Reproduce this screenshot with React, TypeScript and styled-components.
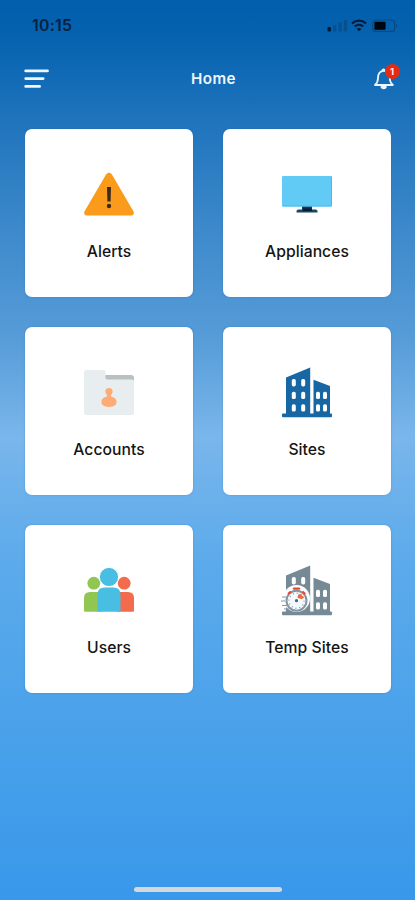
import React from 'react';
import styled, { createGlobalStyle } from 'styled-components';

const GlobalStyle = createGlobalStyle`
  * { box-sizing: border-box; }
  body { margin: 0; font-family: Inter, 'Liberation Sans', sans-serif; }
  svg { display: block; flex: none; }
`;

const Screen = styled.div`
  width: 415px;
  height: 900px;
  display: flex;
  flex-direction: column;
  overflow: hidden;
  background: linear-gradient(180deg, #005eac 0%, #0562af 4%, #2175bd 14%, #458fcf 29%, #559bd7 37%, #79b6eb 48.5%, #5baaeb 63%, #3898ea 100%);
`;

const StatusBar = styled.header`
  height: 50px;
  padding: 0 17px 0 32px;
  display: flex;
  align-items: center;
  justify-content: space-between;
`;

const Clock = styled.time`
  font-size: 15.8px;
  font-weight: 600;
  letter-spacing: 0.3px;
  color: #06213f;
`;

const NavBar = styled.nav`
  height: 58px;
  padding: 0 14px 0 24px;
  display: grid;
  grid-template-columns: 28px 1fr 28px;
  align-items: center;
`;

const IconButton = styled.button`
  padding: 0;
  border: 0;
  background: none;
  height: 30px;
  display: flex;
  align-items: center;
`;

const BellButton = styled(IconButton)`
  position: relative;
`;

const Badge = styled.span`
  position: absolute;
  top: 0;
  right: 1.5px;
  width: 15px;
  height: 15px;
  border-radius: 50%;
  background: #e62b12;
  color: #ffe9e4;
  font: 700 9.5px/15px Inter, sans-serif;
  text-align: center;
`;

const Title = styled.h1`
  margin: 0;
  padding-left: 2px;
  font-size: 15.2px;
  line-height: 20px;
  font-weight: 600;
  letter-spacing: 0.4px;
  text-align: center;
  color: #eef6ff;
`;

const Grid = styled.main`
  flex: 1;
  padding: 21px 25px 0;
  display: grid;
  grid-template-columns: repeat(2, 168px);
  grid-auto-rows: 168px;
  gap: 30px;
  align-content: start;
`;

const Card = styled.a`
  padding-top: 39px;
  display: flex;
  flex-direction: column;
  align-items: center;
  gap: 22px;
  background: #fff;
  border-radius: 7px;
  box-shadow: 0 0 2px rgba(20, 90, 160, 0.35);
`;

const Label = styled.span`
  font-size: 15.7px;
  line-height: 20px;
  font-weight: 500;
  letter-spacing: 0.05px;
  color: #151515;
`;

const HomeArea = styled.footer`
  height: 16px;
  padding-top: 3px;
  display: flex;
  justify-content: center;
`;

const HomeIndicator = styled.div`
  width: 148px;
  height: 5px;
  border-radius: 3px;
  background: #d5d7dc;
`;

const StatusIcons = () => (
  <svg width="74" height="16" viewBox="0 0 74 16">
    <rect x="3.5" y="10" width="3.5" height="4.5" rx="1" fill="#031a33" />
    <g fill="#07508f">
      <rect x="9" y="8" width="3.3" height="6.5" rx="1" />
      <rect x="14.5" y="5.5" width="3.3" height="9" rx="1" />
      <rect x="19.8" y="3" width="3.3" height="11.5" rx="1" />
    </g>
    <g fill="none" stroke="#021c38" strokeWidth="2.2">
      <path d="M28 6.4c4-3.7 10-3.7 14 0" />
      <path d="M30.8 9.5c2.4-2.2 6-2.2 8.4 0" />
    </g>
    <path d="M35 14.3l-2.4-2.4c1.4-1.2 3.4-1.2 4.8 0z" fill="#021c38" />
    <rect x="48.7" y="3" width="22" height="11.4" rx="3" fill="none" stroke="#084a83" strokeWidth="1.2" />
    <rect x="50.4" y="4.7" width="11.2" height="8" rx="1" fill="#01060e" />
    <path d="M72 6.8c1.6.8 1.6 3 0 3.8z" fill="#084a83" />
  </svg>
);

const MenuIcon = () => (
  <svg width="26" height="22" viewBox="0 0 26 22" stroke="#eef6ff" strokeWidth="2.8" strokeLinecap="round">
    <path d="M1.7 2.9h21.8M1.7 10.6h17.5M1.7 18.4h13.9" />
  </svg>
);

const BellIcon = () => (
  <svg width="24" height="26" viewBox="0 0 24 26" fill="none" stroke="#edf6ff" strokeWidth="1.8" strokeLinejoin="round" strokeLinecap="round">
    <path d="M2 19c2.2-1.8 3-4 3-7 0-4.4 1.9-7.2 5.9-7.2s5.9 2.8 5.9 7.2c0 3 .8 5.2 3.1 7z" />
    <path d="M9.4 4.2c.4-1.2 2-1.2 2.4 0M8.4 21c.8 1.8 3.8 1.8 4.6 0z" />
  </svg>
);

const Glyph = styled.svg.attrs({ width: 52, height: 52, viewBox: '0 0 52 52' })``;

const AlertIcon = () => (
  <Glyph>
    <path d="M23.2 6.2c1.2-2.1 4.4-2.1 5.6 0l21.6 37c1.2 2-.1 4.4-2.4 4.4H4c-2.3 0-3.6-2.4-2.4-4.4z" fill="#fb9b1c" />
    <path d="M24 19h4l-.4 14.5h-3.2z" fill="#3c2b18" />
    <circle cx="26" cy="38" r="2.2" fill="#3c2b18" />
  </Glyph>
);

const MonitorIcon = () => (
  <Glyph>
    <path d="M21 37h10v5H21z" fill="#143955" />
    <path d="M15.5 43.4c0-1.6 1-2 3-2h15c2 0 3 .4 3 2v1h-21z" fill="#174767" />
    <path d="M22 40.5h9v2.5h-9z" fill="#071e34" />
    <rect x="1" y="8" width="50" height="30.5" rx="1" fill="#62cbf5" />
    <path d="M1.5 38h49V8.8" fill="none" stroke="#4fb9e4" />
  </Glyph>
);

const FolderIcon = () => (
  <Glyph>
    <path d="M22 9h26c2 0 3 1 3 3v6H22z" fill="#b8c0c2" />
    <path d="M1 6.5q0-2.5 2.5-2.5h17q2 0 2 2v5.5q0 2 2 2H49q2 0 2 2V47q0 2-2 2H3q-2 0-2-2z" fill="#e8edf0" />
    <circle cx="26" cy="25.6" r="3.6" fill="#ffab76" />
    <path d="M24 28h4v2.6c3.7.6 5.6 2.8 5.6 5.5 0 3.1-3 4.9-7.6 4.9s-7.6-1.8-7.6-4.9c0-2.7 1.9-4.9 5.6-5.5z" fill="#ffab76" />
  </Glyph>
);

const Buildings = ({ color }: { color: string }) => (
  <>
    <path d="M5 48.5V11.4L29.2 1.4v47.1zM32.5 13.8L49 19.9v28.6H32.5z" fill={color} />
    <rect x="1" y="47.6" width="50" height="3.7" rx="1" fill={color} />
    <g fill="#fff">
      {[13, 25.7, 38.2].map(y => (
        <React.Fragment key={y}>
          <rect x="10.8" y={y} width="4" height="7.4" rx="1.7" />
          <rect x="20.2" y={y} width="4" height="7.4" rx="1.7" />
        </React.Fragment>
      ))}
      {[25.7, 38.2].map(y => (
        <React.Fragment key={y}>
          <rect x="35" y={y} width="4" height="7.4" rx="1.7" />
          <rect x="42" y={y} width="4" height="7.4" rx="1.7" />
        </React.Fragment>
      ))}
    </g>
  </>
);

const SitesIcon = () => <Glyph><Buildings color="#1767a4" /></Glyph>;

const UsersIcon = () => (
  <Glyph>
    <circle cx="10.8" cy="19.2" r="6.4" fill="#91c653" />
    <path d="M1 46.5V34q0-6 6-6h11v19.7H2.2q-1.2 0-1.2-1.2z" fill="#91c653" />
    <circle cx="41.2" cy="19.2" r="6.4" fill="#f26b4c" />
    <path d="M34 28h11q6 0 6 6v12.5q0 1.2-1.2 1.2H34z" fill="#f26b4c" />
    <path d="M14.5 47.7V30.5q0-7 7-7h9q7 0 7 7v17.2z" fill="#47bee2" />
    <circle cx="26" cy="13" r="9.6" fill="#47bee2" stroke="#fff" strokeWidth="1" />
  </Glyph>
);

const TempSitesIcon = () => (
  <Glyph>
    <Buildings color="#768a96" />
    <circle cx="15.5" cy="34.5" r="13.5" fill="#fff" />
    <circle cx="15.5" cy="36.7" r="10" fill="#f7fafc" stroke="#8297a5" strokeWidth="2" />
    <circle cx="15.5" cy="36.7" r="7.6" fill="none" stroke="#7f95a6" strokeWidth="1.4" strokeDasharray="1 2.98" />
    <g stroke="#ef4330" fill="none">
      <path d="M13 24.6h5" strokeWidth="2.4" strokeLinecap="round" />
      <path d="M7 30l2.8-2.4M21.5 27.6l2.8 2.4" strokeWidth="2" />
    </g>
    <path d="M16.5 34l.5-3 2-1.2 3.5 3-1.3 2.4z" fill="#f16a3b" />
    <circle cx="15.5" cy="36.7" r="1.6" fill="#3267b2" />
    <path d="M1 33h4M0 37h4M1 41.5h5M3 45h5" stroke="#8b98a0" strokeWidth="1.1" />
  </Glyph>
);

const sections = [
  { label: 'Alerts', Icon: AlertIcon },
  { label: 'Appliances', Icon: MonitorIcon },
  { label: 'Accounts', Icon: FolderIcon },
  { label: 'Sites', Icon: SitesIcon },
  { label: 'Users', Icon: UsersIcon },
  { label: 'Temp Sites', Icon: TempSitesIcon },
];

export default function App() {
  return (
    <>
      <GlobalStyle />
      <Screen>
        <StatusBar>
          <Clock>10:15</Clock>
          <StatusIcons />
        </StatusBar>
        <NavBar>
          <IconButton aria-label="Menu"><MenuIcon /></IconButton>
          <Title>Home</Title>
          <BellButton aria-label="Notifications">
            <BellIcon />
            <Badge>1</Badge>
          </BellButton>
        </NavBar>
        <Grid>
          {sections.map(({ label, Icon }) => (
            <Card key={label}>
              <Icon />
              <Label>{label}</Label>
            </Card>
          ))}
        </Grid>
        <HomeArea><HomeIndicator /></HomeArea>
      </Screen>
    </>
  );
}
